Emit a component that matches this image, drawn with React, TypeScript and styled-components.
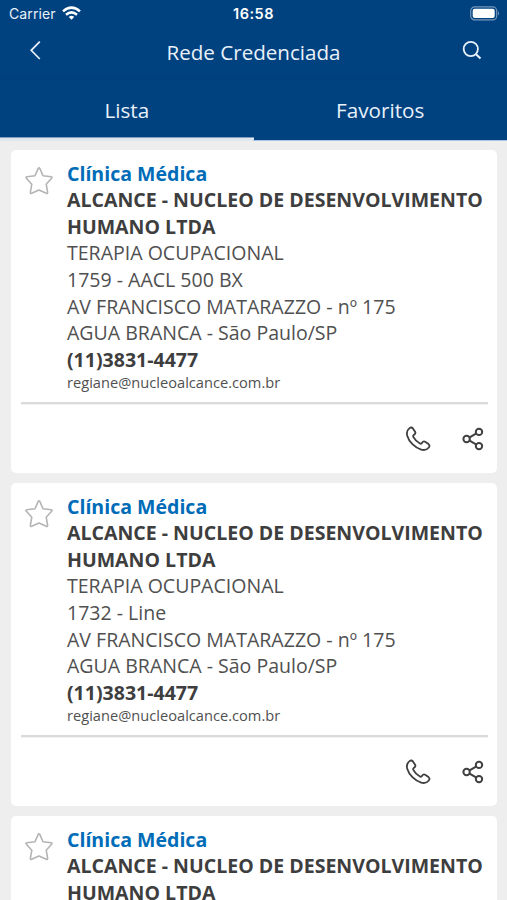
import React from "react";
import styled, { createGlobalStyle } from "styled-components";

const Global = createGlobalStyle`
  * { box-sizing: border-box; }
  html, body { margin: 0; background: #eeeeee; }
  body { height: 900px; overflow: hidden; font-family: "Open Sans", "Noto Sans", sans-serif; }
`;

const Screen = styled.main`
  width: 507px;
  height: 900px;
  overflow: hidden;
  background: #eeeeee;
`;

const Header = styled.header`
  height: 140px;
  background: #004280;
  color: #e9f1fa;
`;

const StatusBar = styled.div`
  display: grid;
  grid-template-columns: 1fr auto 1fr;
  align-items: center;
  height: 26px;
  padding: 0 7px 0 9px;
  font: 400 14px/27px Inter, sans-serif;
`;

const Carrier = styled.div`
  display: flex;
  align-items: center;
  gap: 6px;
  letter-spacing: 0.1px;
`;

const Clock = styled.div`
  padding-right: 2px;
  font-weight: 600;
  font-size: 14.5px;
  letter-spacing: 0.5px;
  color: #fff;
`;

const Battery = styled.svg`
  justify-self: end;
`;

const NavBar = styled.div`
  display: grid;
  grid-template-columns: 70px 1fr 70px;
  align-items: start;
  height: 53px;
  border-bottom: 1px solid #003e79;
`;

const NavButton = styled.button`
  display: flex;
  justify-content: center;
  padding: 14px 0 0;
  border: 0;
  background: none;
  color: inherit;
`;

const Title = styled.h1`
  margin: 0;
  text-align: center;
  font-size: 20.6px;
  font-weight: 400;
  line-height: 52px;
`;

const Tabs = styled.nav`
  display: grid;
  grid-template-columns: 1fr 1fr;
  height: 61px;
`;

const Tab = styled.div<{ $active?: boolean }>`
  height: 61px;
  text-align: center;
  font-size: 20.7px;
  line-height: 62px;
  box-shadow: ${(p) =>
    p.$active ? "inset 0 -2px #dfe5ee, inset 0 -3px #7f9dbd" : "none"};
`;

const TabEdge = styled.div`
  height: 1px;
  background: linear-gradient(to right, #e3e7ee 50%, #a9c3e0 50%);
`;

const List = styled.div`
  display: flex;
  flex-direction: column;
  gap: 10px;
  padding: 9px 10px 0 11px;
`;

const Card = styled.article`
  height: 323px;
  flex: none;
  padding: 10px 9px 0 10px;
  border-radius: 5px;
  background: #fff;
`;

const Info = styled.div`
  display: grid;
  grid-template-columns: 46px 1fr;
  height: 242px;
`;

const Details = styled.div`
  padding-top: 0.5px;
`;

const Star = styled.svg`
  margin: 6px 0 0 3px;
`;

const Line = styled.div<{ $bold?: boolean; $accent?: boolean }>`
  font-size: 19.54px;
  line-height: 26.65px;
  white-space: nowrap;
  font-weight: ${(p) => (p.$bold ? 700 : 400)};
  color: ${(p) => (p.$accent ? "#006cb8" : p.$bold ? "#3e3e3e" : "#505050")};
`;

const Email = styled.div`
  margin-top: -1.8px;
  font-size: 14.65px;
  line-height: 20px;
  color: #505050;
`;

const Actions = styled.div`
  display: flex;
  justify-content: flex-end;
  align-items: center;
  gap: 31px;
  height: 72px;
  padding-right: 4px;
  border-top: 2px solid #dadada;
  box-shadow: inset 0 1px #f3f3f3;
`;

const WifiIcon = () => (
  <svg width="19" height="15" viewBox="0 0 19 15" fill="none" stroke="#fff" strokeWidth="2.5">
    <path d="M1 5.4Q9.5-2.1 18 5.4" />
    <path d="M4 8.8Q9.5 4 15 8.8" />
    <path d="M6.8 10.9Q9.5 8.7 12.2 10.9L9.5 13.7Z" fill="#fff" stroke="none" />
  </svg>
);

const StarIcon = () => (
  <Star width="30" height="30" viewBox="0 0 30 30" fill="none" stroke="#b4b4b4" strokeWidth="1.6" strokeLinejoin="round">
    <path d="M14.2 2.4Q15 1 15.8 2.4L19 9.8L27.2 10.8Q28.7 11.1 27.6 12.3L22.2 18.2L23.6 26.2Q23.8 27.9 22.3 27.3L15 24.1L7.7 27.3Q6.2 27.9 6.4 26.2L7.8 18.2L2.4 12.3Q1.3 11.1 2.8 10.8L11 9.8Z" />
  </Star>
);

const PhoneIcon = () => (
  <svg width="26" height="26" viewBox="-0.5 -0.5 27 27" fill="none" stroke="#404040" strokeWidth="1.9" strokeLinejoin="round">
    <path d="M4.2 1.7C5.4.7 6.7.8 7.7 2L10 5.5C10.7 6.8 10.3 7.9 8.4 9C7.7 9.5 7.8 10.1 8.3 11C9.7 13.7 12.3 16.1 15 17.6C15.8 18.1 16.4 18 16.9 17.3C18 15.6 19.1 15.1 20.4 15.8L23.9 18.3C25.2 19.4 25.2 20.6 24.2 21.8C22.3 24.2 19.6 25 16.3 24C9.6 21.9 3.6 15.8 1.8 9.6C.9 6.3 1.8 3.6 4.2 1.7Z" />
  </svg>
);

const ShareIcon = () => (
  <svg width="22" height="24" viewBox="0 0 22 24" fill="none" stroke="#404040" strokeWidth="2">
    <circle cx="4.6" cy="12" r="3.2" />
    <circle cx="17" cy="4.9" r="3.2" />
    <circle cx="17" cy="19.1" r="3.2" />
    <path d="M7.6 10.3L14 6.6M7.6 13.7L14 17.4" />
  </svg>
);

const plans = ["1759 - AACL 500 BX", "1732 - Line", "1732 - Line"];

export default function App() {
  return (
    <Screen>
      <Global />
      <Header>
        <StatusBar>
          <Carrier>Carrier <WifiIcon /></Carrier>
          <Clock>16:58</Clock>
          <Battery width="30" height="15" viewBox="0 0 30 15">
            <rect x=".7" y=".9" width="26" height="13" rx="4" fill="none" stroke="#7897b8" strokeWidth="1.2" />
            <rect x="2.7" y="2.8" width="22" height="9.2" rx="2" fill="#fff" />
            <path d="M28 5.2Q30 7.4 28 9.6Z" fill="#7897b8" />
          </Battery>
        </StatusBar>
        <NavBar>
          <NavButton aria-label="Voltar">
            <svg width="12" height="20" viewBox="0 0 12 20" fill="none" stroke="currentColor" strokeWidth="1.7">
              <path d="M10.8 1.6L2.2 10.3L10.8 19" />
            </svg>
          </NavButton>
          <Title>Rede Credenciada</Title>
          <NavButton aria-label="Buscar">
            <svg width="20" height="20" viewBox="0 0 20 20" fill="none" stroke="currentColor" strokeWidth="1.8">
              <circle cx="8.8" cy="9" r="7.1" />
              <path d="M13.8 14L18.5 18.6" strokeWidth="2.1" />
            </svg>
          </NavButton>
        </NavBar>
        <Tabs>
          <Tab $active>Lista</Tab>
          <Tab>Favoritos</Tab>
        </Tabs>
      </Header>
      <TabEdge />
      <List>
        {plans.map((plan, i) => (
          <Card key={i}>
            <Info>
              <StarIcon />
              <Details>
                <Line $bold $accent>Clínica Médica</Line>
                <Line $bold>ALCANCE - NUCLEO DE DESENVOLVIMENTO<br />HUMANO LTDA</Line>
                <Line>TERAPIA OCUPACIONAL</Line>
                <Line>{plan}</Line>
                <Line>AV FRANCISCO MATARAZZO - nº 175</Line>
                <Line>AGUA BRANCA - São Paulo/SP</Line>
                <Line $bold>(11)3831-4477</Line>
                <Email>regiane@nucleoalcance.com.br</Email>
              </Details>
            </Info>
            <Actions>
              <PhoneIcon />
              <ShareIcon />
            </Actions>
          </Card>
        ))}
      </List>
    </Screen>
  );
}
